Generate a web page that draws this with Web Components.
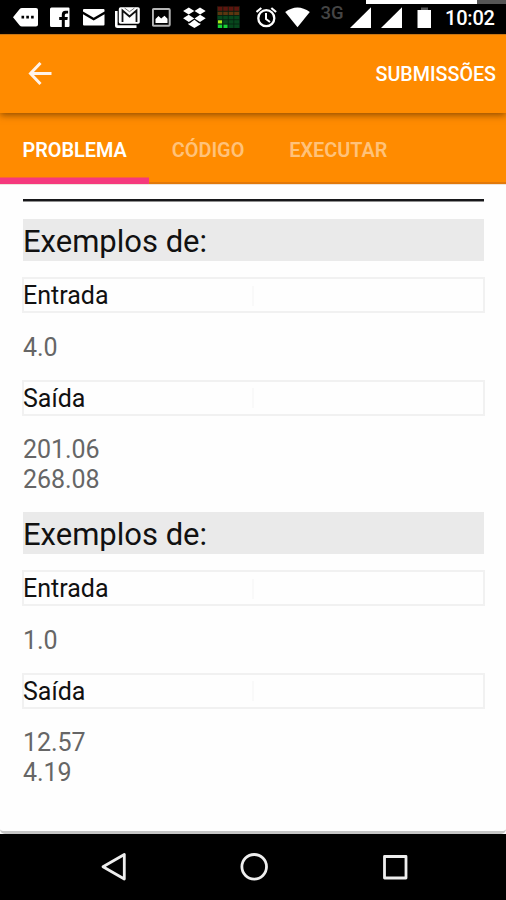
<!DOCTYPE html>
<html lang="pt">
<head>
<meta charset="utf-8">
<title>Problema</title>
<style>
html,body{margin:0;height:900px;overflow:hidden;background:#fff}
body{font-family:Roboto,"Noto Sans",sans-serif}
</style>
</head>
<body>
<phone-screen></phone-screen>
<script>
const define=(name,html)=>customElements.define(name,class extends HTMLElement{
  constructor(){super();this.attachShadow({mode:'open'}).innerHTML=html;}
});

define('status-bar',`
<style>
:host{display:flex;height:34px;background:#000;align-items:flex-start;position:relative;box-sizing:border-box}
svg{display:block;flex:none;height:34px;margin-left:var(--g);fill:#fff}
span{flex:none;white-space:nowrap}
.net{margin-left:10.500px;width:24.500px;font-size:18.5px;line-height:27px;font-weight:500;color:#454545}
.time{margin-left:14.5px;font-size:20px;line-height:37px;font-weight:500;color:#fff;letter-spacing:-.2px}
.over{position:absolute;left:366px;top:0;width:140px;height:3.5px;background:linear-gradient(90deg,#fff 111px,#555 111px)}
</style>
<svg style="--g:13px" width="25" viewBox="13 0 25 34"><path d="M13 17.3 19.5 9.3Q20.5 8 22 8H36q2 0 2 2V24.500q0 2-2 2H22q-1.500 0-2.500-1.300Z"/><path fill="#000" d="M21.500 15.800h2.600v2.600h-2.600zM26.300 15.800h2.600v2.600h-2.600zM31.100 15.800h2.600v2.600h-2.600z"/></svg>
<svg style="--g:11.500px" width="20" viewBox="49.500 0 20 34"><path d="M51 7.500H68q1 0 1 1V26q0 1-1 1H64.300V20h2.600l.4-3h-3v-2q0-1.600 1.700-1.600h1.600v-2.700h-2.700q-3.600 0-3.600 4v2.300h-2.600v3h2.600v7H51q-1.500 0-1.500-1.500V9Q49.500 7.500 51 7.500Z"/></svg>
<svg style="--g:13.500px" width="22" viewBox="83 0 22 34"><path d="M84 9h19.500q1 0 1 1v1.500l-10.800 6.200L83 11.500V10q0-1 1-1ZM83 14.300l10.700 6.200 10.800-6.200V24.500q0 1-1 1H84q-1 0-1-1Z"/></svg>
<svg style="--g:9.500px" width="26" viewBox="114.500 0 26 34"><path d="M114.500 11h2.600V25.300H136V28H117q-2.500 0-2.500-2.500Z"/><rect x="118.300" y="7.200" width="21" height="16.500" rx="1.800"/><path d="M122 22V10.500l7 6 7-6V22" fill="none" stroke="#111" stroke-width="1.800"/><path d="M124 8l5 3.700L134 8" fill="none" stroke="#777" stroke-width="1"/></svg>
<svg style="--g:11px" width="19" viewBox="151.500 0 19 34"><rect x="152.400" y="9" width="16.800" height="16.700" rx="1" fill="#000" stroke="#b5b5b5" stroke-width="2"/><path d="M155 23v-4l3-3 2.700 2.500 3.300-2.800 3 3V23Z"/></svg>
<svg style="--g:12.500px" width="23" viewBox="183 0 23 34"><path d="m188.800 7.500 5.500 3.600-5.600 3.500-5.600-3.700ZM200 7.500l-5.500 3.600 5.600 3.500 5.600-3.700ZM183.100 18.300l5.600-3.600 5.600 3.700-5.500 3.600ZM205.700 18.300l-5.600-3.600-5.600 3.700 5.500 3.600ZM188.500 23l1 .5 4.900-3.700 4.900 3.700 1-.5v1.500l-5.900 3.500-5.900-3.500Z"/></svg>
<svg style="--g:10.500px" width="23" viewBox="216.500 0 23 34"><path fill="#5d160f" d="M216.500 6.500h23v5h-23z"/><path fill="#5c3610" d="M216.500 11.500h23v4h-23z"/><path fill="#07471d" d="M216.500 15.500h23V28h-23z"/><path fill="#a9e817" d="M217.500 20.200h4v3.500h-4z"/><path fill="#18d435" d="M217.500 24.500h4V28h-4zM223 24.500h4V28h-4z"/><path fill="none" stroke="#052010" stroke-width=".8" d="M216.800 6.500V28M222.300 6.500V28M227.800 6.500V28M233.300 6.500V28M239 6.500V28M216.500 11.300h23M216.500 15.500h23M216.500 19.700h23M216.500 24h23"/></svg>
<svg style="--g:16.500px" width="21" viewBox="256 0 21 34"><g fill="none" stroke="#fff"><circle cx="266.300" cy="18.200" r="8" stroke-width="2.300"/><path d="M266 13v6l4 3" stroke-width="2"/><path d="m256.500 12 4.800-4M276.100 12l-4.800-4" stroke-width="2.200"/></g></svg>
<svg style="--g:8px" width="25" viewBox="285.500 0 25 34"><path d="M298 27.300 285.700 12Q298 2.800 310.300 12Z"/></svg>
<span class="net">3G</span>
<svg style="--g:4.500px" width="21" viewBox="350 0 21 34"><path d="M350 28 371 7.300V28Z"/></svg>
<svg style="--g:10px" width="21" viewBox="381 0 21 34"><path d="M381 28 402 7.300V28Z"/></svg>
<svg style="--g:15px" width="14" viewBox="417 0 14 34"><path d="M417.500 10h13.500V28h-13.500z"/><path fill="#555" d="M421 7.500h7V10h-7z"/></svg>
<span class="time">10:02</span>
<div class="over"></div>`);

define('app-bar',`
<style>
:host{display:flex;height:79px;background:#ff8b00;justify-content:space-between;align-items:center;padding:0 10px 0 28px;box-sizing:border-box;position:relative;z-index:1;box-shadow:0 2px 7px rgba(70,35,0,.6),inset 0 1px #c77514}
svg{display:block}
span{font-size:19.7px;font-weight:500;color:#fff;line-height:24px;padding-top:3px}
</style>
<svg width="24" height="24" viewBox="0 0 24 24" fill="none" stroke="#fff3ea" stroke-width="3"><path d="M23.500 11.500H3M12.500 1 2.500 11.500 12.500 22"/></svg>
<span><slot></slot></span>`);

define('tab-item',`
<style>
:host{display:flex;align-items:center;height:71px;box-sizing:border-box;padding:4px 22.500px 0 22.500px;font-size:19.85px;font-weight:600;color:#ffc27a}
:host([active]){color:#fff;box-shadow:inset 0 -6.500px #f5397d}
</style><slot></slot>`);

define('tab-strip',`
<style>:host{display:flex;height:71px;background:#ff8b00;box-shadow:inset 0 -2px #e2790a,0 1px 0 #eee4da}</style>
<slot></slot>`);

define('io-label',`
<style>
:host{display:grid;grid-template-columns:228px 1fr;align-items:center;height:36px;flex:none;box-sizing:border-box;margin:0 -1px;border:2px solid #f1f1f1;font-size:25px;line-height:32px;color:#111}
i{height:20px;width:2px;background:#f9f9f9}
span{padding-top:1px;margin-left:-1px}
</style><span><slot></slot></span><i></i>`);

define('io-value',`
<style>:host{display:block;font-size:25px;line-height:29.500px;color:#666;letter-spacing:-.05px}</style><slot></slot>`);

define('example-block',`
<style>
:host{display:flex;flex-direction:column;height:293.300px}
h2{margin:0 0 16px;height:42px;flex:none;background:#eaeaea;font-size:31px;font-weight:400;line-height:45px;color:#111}
io-value.in{margin:20px 0 17px}
io-value.out{margin:19.500px 0 0}
</style>
<h2>Exemplos de:</h2>
<io-label>Entrada</io-label>
<io-value class="in"><slot name="in"></slot></io-value>
<io-label>Saída</io-label>
<io-value class="out"><slot name="out"></slot></io-value>`);

define('nav-bar',`
<style>
:host{display:flex;height:66px;background:#000;justify-content:center;gap:113px;padding-left:1px;box-sizing:border-box}
svg{display:block;fill:none;stroke:#eee;stroke-width:2.800;stroke-linejoin:round}
</style>
<svg width="28" height="66"><path d="M25.300 20.500V45L4 32.800Z"/></svg>
<svg width="28" height="66"><circle cx="14.200" cy="32.800" r="12.300"/></svg>
<svg width="28" height="66"><rect x="3.500" y="22.500" width="21.500" height="21.500"/></svg>`);

define('phone-screen',`
<style>
:host{display:flex;flex-direction:column;width:506px;height:900px;background:#fefefe}
main{flex:1;min-height:0;padding:15px 22px 0 23px;box-sizing:border-box;border-bottom:3.500px solid #c6c6c6;border-radius:0 0 5px 5px;overflow:hidden}
hr{margin:0 0 17px;border:0;height:3px;background:linear-gradient(#17171a 2.300px,#8f8f8f 2.300px)}
</style>
<status-bar></status-bar>
<app-bar>SUBMISSÕES</app-bar>
<tab-strip><tab-item active>PROBLEMA</tab-item><tab-item>CÓDIGO</tab-item><tab-item>EXECUTAR</tab-item></tab-strip>
<main>
<hr>
<example-block><span slot="in">4.0</span><span slot="out">201.06<br>268.08</span></example-block>
<example-block><span slot="in">1.0</span><span slot="out">12.57<br>4.19</span></example-block>
</main>
<nav-bar></nav-bar>`);
</script>
</body>
</html>
